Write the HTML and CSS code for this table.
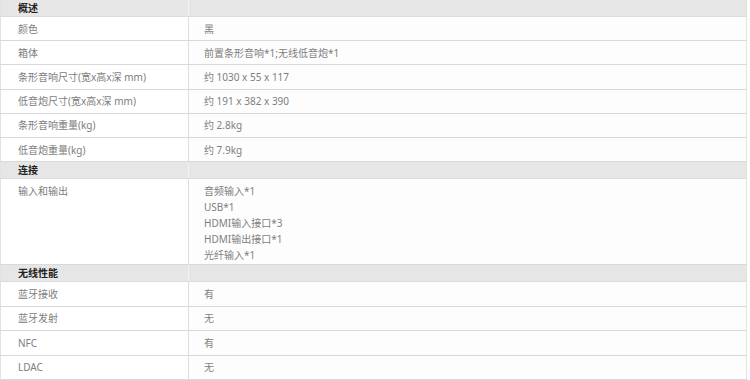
FILE: index.html
```html
<!DOCTYPE html>
<html lang="zh">
<head>
<meta charset="utf-8">
<link rel="stylesheet" href="styles.css">
</head>
<body>
<table class="spec">
  <tr class="group"><th class="k">概述</th><th class="v"></th></tr>
  <tr class="row"><td class="k">颜色</td><td class="v">黑</td></tr>
  <tr class="row"><td class="k">箱体</td><td class="v">前置条形音响*1;无线低音炮*1</td></tr>
  <tr class="row"><td class="k">条形音响尺寸(宽x高x深 mm)</td><td class="v">约 1030 x 55 x 117</td></tr>
  <tr class="row"><td class="k">低音炮尺寸(宽x高x深 mm)</td><td class="v">约 191 x 382 x 390</td></tr>
  <tr class="row"><td class="k">条形音响重量(kg)</td><td class="v">约 2.8kg</td></tr>
  <tr class="row"><td class="k">低音炮重量(kg)</td><td class="v">约 7.9kg</td></tr>
  <tr class="group"><th class="k">连接</th><th class="v"></th></tr>
  <tr class="multi"><td class="k">输入和输出</td><td class="v">音频输入*1<br>USB*1<br>HDMI输入接口*3<br>HDMI输出接口*1<br>光纤输入*1</td></tr>
  <tr class="group"><th class="k">无线性能</th><th class="v"></th></tr>
  <tr class="row r2"><td class="k">蓝牙接收</td><td class="v">有</td></tr>
  <tr class="row r2"><td class="k">蓝牙发射</td><td class="v">无</td></tr>
  <tr class="row r2"><td class="k">NFC</td><td class="v">有</td></tr>
  <tr class="row r2"><td class="k">LDAC</td><td class="v">无</td></tr>
</table>
</body>
</html>
```
FILE: styles.css
```css
html, body {
  margin: 0;
  padding: 0;
  background: #ffffff;
}
body {
  font-family: "Noto Sans", "Noto Sans CJK SC", sans-serif;
  font-size: 10px;
  color: #7d7d7d;
}
.spec {
  width: 747px;
  border-collapse: collapse;
  border-left: 1px solid #e2e2e2;
  border-right: 1px solid #e2e2e2;
}
.spec th, .spec td {
  padding: 0 0 0 17px;
  line-height: 16px;
  text-align: left;
  vertical-align: middle;
  border-bottom: 1px solid #d9d9d9;
}
.spec .k {
  width: 170px;
  border-right: 1px solid #dedede;
  background: #ffffff;
}
.spec .v {
  padding-left: 15px;
  background: #fdfdfd;
}
.group th {
  height: 15px;
  background: #e6e6e6;
  color: #222;
  font-weight: bold;
  border-bottom: 1px solid #dcdcdc;
}
.group th.k {
  background: #e6e6e6;
  border-right: 1px solid #f2f2f2;
}
.group th.v {
  background: #e6e6e6;
}
.row td {
  height: 23.2px;
}
.row.r2 td {
  height: 23.5px;
}
.multi td {
  height: 86px;
  vertical-align: top;
  padding-top: 4px;
  box-sizing: border-box;
}
```
